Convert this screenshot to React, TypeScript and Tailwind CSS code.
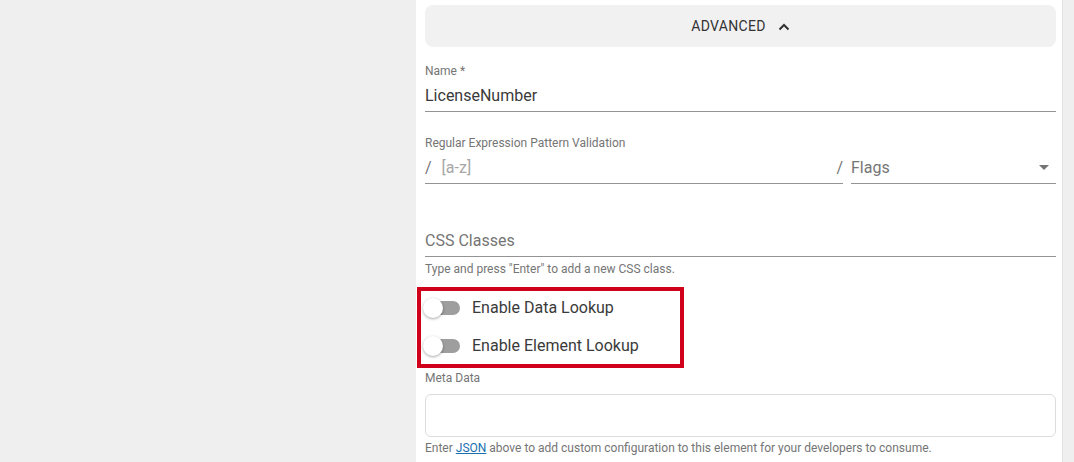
import React from "react";

const font = { fontFamily: "Roboto, 'Noto Sans', Arial, sans-serif" };

function Toggle() {
  return (
    <div className="relative w-[38px] h-[20px] flex items-center">
      <div className="ml-[4px] w-[33px] h-[14px] rounded-full bg-[#9e9e9e]" />
      <div className="absolute left-0 top-0 w-[20px] h-[20px] rounded-full bg-white shadow-[0_1px_3px_rgba(0,0,0,0.35)]" />
    </div>
  );
}

export default function App() {
  return (
    <div className="flex h-[462px] overflow-hidden bg-[#efefef] text-[#333]" style={font}>
      <div className="w-[416px] shrink-0" />
      <div className="w-[647px] shrink-0 bg-white pl-[9px] pr-[6px] border-r border-[#e3e3e3] flex flex-col">
        {/* accordion header */}
        <div className="mt-[5px] h-[42px] rounded-lg bg-[#f1f1f1] flex items-center justify-center gap-[12px]">
          <span className="text-[14px] tracking-[0.3px] text-[#333]">ADVANCED</span>
          <svg width="12" height="8" viewBox="0 0 12 8" className="mt-[1px]">
            <polyline points="1.5,6.5 6,2 10.5,6.5" fill="none" stroke="#333" strokeWidth="2" />
          </svg>
        </div>

        {/* Name */}
        <div className="mt-[17px] text-[12px] leading-[14px] text-[#757575]">Name *</div>
        <div className="h-[34px] pt-[3px] border-b border-[#949494] flex items-center text-[16px] text-[#3a3a3a]">
          LicenseNumber
        </div>

        {/* Regex */}
        <div className="mt-[24px] text-[12px] leading-[14px] text-[#757575]">
          Regular Expression Pattern Validation
        </div>
        <div className="flex items-stretch h-[34px] gap-[8px]">
          <div className="flex-1 pt-[2px] border-b border-[#949494] flex items-center text-[16px]">
            <span className="text-[#757575]">/</span>
            <span className="ml-[10px] text-[#a6a6a6]">[a-z]</span>
            <span className="ml-auto text-[#757575]">/</span>
          </div>
          <div className="w-[205px] pt-[2px] border-b border-[#949494] flex items-center justify-between text-[16px] text-[#757575]">
            <span>Flags</span>
            <svg width="10" height="5" viewBox="0 0 10 5" className="mr-[7px]">
              <polygon points="0,0 10,0 5,5" fill="#757575" />
            </svg>
          </div>
        </div>

        {/* CSS classes */}
        <div className="mt-[38px] h-[35px] pt-[4px] border-b border-[#949494] flex items-center text-[16px] text-[#757575]">
          CSS Classes
        </div>
        <div className="mt-[5px] text-[12px] leading-[14px] text-[#757575]">
          Type and press "Enter" to add a new CSS class.
        </div>

        {/* lookup toggles */}
        <div className="mt-[11px] -ml-[8px] w-[267px] h-[81px] border-[4px] border-[#d0021b] flex flex-col pl-[2px]">
          <div className="mt-[7px] h-[20px] flex items-center gap-[11px]">
            <Toggle />
            <span className="text-[16px] text-[#3a3a3a]">Enable Data Lookup</span>
          </div>
          <div className="mt-[18px] h-[20px] flex items-center gap-[11px]">
            <Toggle />
            <span className="text-[16px] text-[#3a3a3a]">Enable Element Lookup</span>
          </div>
        </div>

        {/* meta data */}
        <div className="mt-[3px] text-[12px] leading-[14px] text-[#757575]">Meta Data</div>
        <div className="mt-[9px] h-[43px] rounded-md border border-[#dcdcdc]" />
        <div className="mt-[4px] text-[12px] leading-[14px] text-[#757575]">
          Enter <span className="text-[#1a6fb0] underline">JSON</span> above to add custom configuration to this element for your developers to consume.
        </div>
      </div>
      <div className="flex-1" />
    </div>
  );
}
